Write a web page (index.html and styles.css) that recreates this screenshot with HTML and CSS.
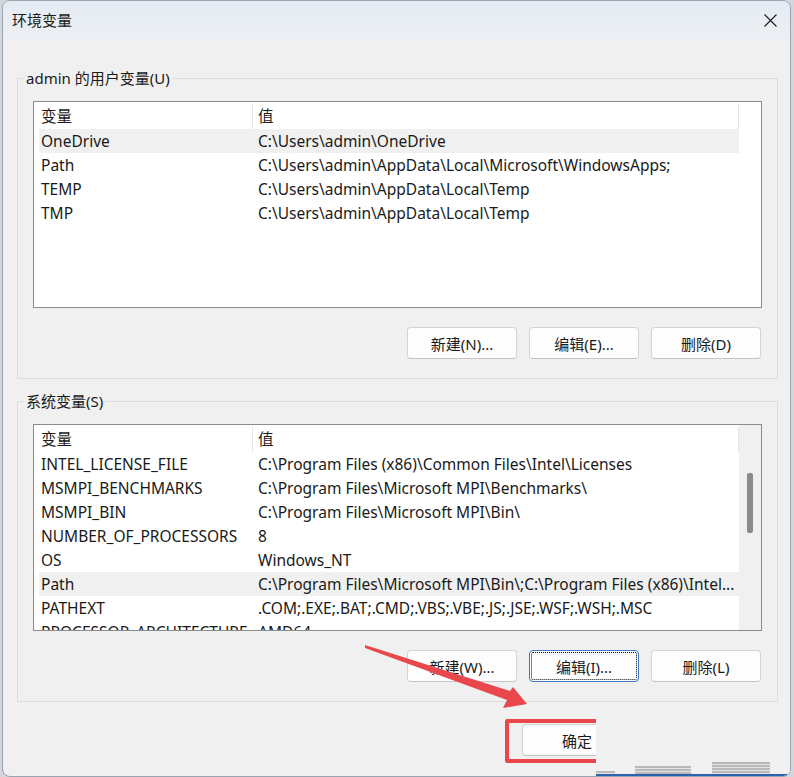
FILE: index.html
```html
<!DOCTYPE html>
<html lang="zh-CN">
  <head>
    <meta charset="UTF-8" />
    <title>环境变量</title>
    <link rel="stylesheet" href="styles.css">
  </head>
  <body>
    <div class="window">
      <!-- Title bar -->
      <div class="titlebar">
        <span class="title">环境变量</span>
        <span class="close">
          <svg width="13" height="13" viewBox="0 0 13 13">
            <path d="M0.5 0.5 L12.5 12.5 M12.5 0.5 L0.5 12.5" stroke="#1a1a1a" stroke-width="1.1" fill="none" />
          </svg>
        </span>
      </div>

      <div class="content">
        <!-- User variables -->
        <fieldset class="group">
          <legend>admin 的用户变量(U)</legend>
          <div class="list">
            <div class="list-body">
              <div class="row head">
                <div class="name">变量</div>
                <div class="value">值</div>
              </div>
              <div class="row selected"><div class="name">OneDrive</div><div class="value">C:\Users\admin\OneDrive</div></div>
              <div class="row"><div class="name">Path</div><div class="value">C:\Users\admin\AppData\Local\Microsoft\WindowsApps;</div></div>
              <div class="row"><div class="name">TEMP</div><div class="value">C:\Users\admin\AppData\Local\Temp</div></div>
              <div class="row"><div class="name">TMP</div><div class="value">C:\Users\admin\AppData\Local\Temp</div></div>
            </div>
            <div class="scroll-space"></div>
          </div>
          <div class="buttons">
            <button class="btn">新建(N)...</button>
            <button class="btn">编辑(E)...</button>
            <button class="btn">删除(D)</button>
          </div>
        </fieldset>

        <!-- System variables -->
        <fieldset class="group second">
          <legend>系统变量(S)</legend>
          <div class="list">
            <div class="list-body">
              <div class="row head">
                <div class="name">变量</div>
                <div class="value">值</div>
              </div>
              <div class="row"><div class="name">INTEL_LICENSE_FILE</div><div class="value">C:\Program Files (x86)\Common Files\Intel\Licenses</div></div>
              <div class="row"><div class="name">MSMPI_BENCHMARKS</div><div class="value">C:\Program Files\Microsoft MPI\Benchmarks\</div></div>
              <div class="row"><div class="name">MSMPI_BIN</div><div class="value">C:\Program Files\Microsoft MPI\Bin\</div></div>
              <div class="row"><div class="name">NUMBER_OF_PROCESSORS</div><div class="value">8</div></div>
              <div class="row"><div class="name">OS</div><div class="value">Windows_NT</div></div>
              <div class="row selected"><div class="name">Path</div><div class="value">C:\Program Files\Microsoft MPI\Bin\;C:\Program Files (x86)\Intel...</div></div>
              <div class="row"><div class="name">PATHEXT</div><div class="value">.COM;.EXE;.BAT;.CMD;.VBS;.VBE;.JS;.JSE;.WSF;.WSH;.MSC</div></div>
              <div class="row"><div class="name">PROCESSOR_ARCHITECTURE</div><div class="value">AMD64</div></div>
            </div>
            <div class="scrollbar"><div class="thumb"></div></div>
          </div>
          <div class="buttons">
            <button class="btn">新建(W)...</button>
            <button class="btn focused">编辑(I)...</button>
            <button class="btn">删除(L)</button>
          </div>
        </fieldset>

        <div class="footer">
          <button class="btn">确定</button>
          <button class="btn">取消</button>
        </div>
      </div>

      <!-- Annotations -->
      <svg class="arrow" width="794" height="777" viewBox="0 0 794 777">
        <polygon points="365,645 510,691 513,687 527,704 503,708 507,700 365,648" fill="#e8474c" />
      </svg>
      <div class="mark"></div>

      <!-- Pasted strip covering the lower right corner -->
      <div class="patch">
        <div class="stub s1"></div>
        <div class="stub s2"></div>
        <div class="stub s3"></div>
      </div>
    </div>
  </body>
</html>
```

FILE: styles.css
```css
/* General */
body {
  margin: 0;
  padding: 0;
  background-color: #d4d6d9;
  font-family: "Noto Sans", "Noto Sans CJK SC", sans-serif;
  font-size: 15.5px;
  color: #1a1a1a;
  overflow: hidden;
}

.window {
  position: relative;
  width: 787px;
  height: 775px;
  margin-left: 2px;
  background-color: #f0f0f0;
  border: 1px solid #9aa4b0;
  border-radius: 8px;
  overflow: hidden;
}

/* Title bar */
.titlebar {
  height: 39px;
  display: flex;
  align-items: center;
  justify-content: space-between;
  padding: 0 12px 0 9px;
  background: linear-gradient(#e4ebf2, #ecf0f4);
}

.title {
  font-size: 15px;
  line-height: 20px;
  margin-top: -2px;
}

.close {
  display: flex;
  margin-top: -1px;
  margin-right: 1px;
}

/* Content */
.content {
  padding: 0 12px 0 14px;
}

.group {
  margin: 29px 0 0 0;
  padding: 14px 15px 19px 15px;
  border: 1px solid #dcdcdc;
  min-width: 0;
}

.group.second {
  margin-top: 13px;
}

.group legend {
  padding: 0 2px;
  margin-left: -9px;
  line-height: 18px;
  font-size: 15px;
}

/* List view */
.list {
  height: 205px;
  display: flex;
  background: #fff;
  border: 1px solid #8c8c8c;
  overflow: hidden;
}

.list-body {
  flex: 1;
  padding-left: 5px;
}

.row {
  display: flex;
  height: 24px;
  line-height: 24px;
  white-space: nowrap;
}

.row.head {
  height: 27px;
  line-height: 28px;
}

.row.selected {
  background-color: #f0f0f0;
}

.name {
  width: 211px;
  padding-left: 2px;
}

.value {
  flex: 1;
  padding-left: 6px;
}

.row.head .value {
  border-left: 1px solid #e5e5e5;
  border-right: 1px solid #e5e5e5;
  padding-left: 5px;
  margin-top: 2px;
  line-height: 25px;
}

.scroll-space {
  width: 22px;
}

.scrollbar {
  width: 22px;
  background-color: #f0f0f0;
  position: relative;
}

.thumb {
  position: absolute;
  left: 8px;
  top: 48px;
  width: 6px;
  height: 60px;
  background-color: #8a8a8a;
  border-radius: 2px;
}

/* Buttons */
.buttons {
  display: flex;
  justify-content: flex-end;
  gap: 12px;
  margin-top: 19px;
  margin-right: 1px;
}

.btn {
  width: 110px;
  height: 32px;
  font-family: inherit;
  font-size: 15px;
  color: #1a1a1a;
  background-color: #fdfdfd;
  border: 1px solid #d3d3d3;
  border-bottom-color: #c4c4c4;
  border-radius: 4px;
  padding: 0;
}

.btn.focused {
  border-color: #3c78c8;
  outline: 1px dotted #111;
  outline-offset: -3px;
}

.footer {
  display: flex;
  gap: 12px;
  margin-top: 22px;
  padding-left: 505px;
}

/* Annotations */
.arrow {
  position: absolute;
  left: -3px;
  top: -1px;
  pointer-events: none;
}

.mark {
  position: absolute;
  left: 502px;
  top: 718px;
  width: 112px;
  height: 36px;
  border: 4px solid #e8474c;
  border-radius: 2px;
}

.patch {
  position: absolute;
  left: 593px;
  top: 712px;
  right: 0;
  bottom: 0;
  background-color: #f0f0f0;
  border-bottom: 2px solid #2a63a8;
}

.stub {
  position: absolute;
  bottom: 0;
  background: repeating-linear-gradient(#b9b9b9 0 2px, #e4e4e4 2px 3px);
}

.s1 {
  left: 0;
  width: 19px;
  height: 3px;
}

.s2 {
  left: 39px;
  width: 56px;
  height: 8px;
}

.s3 {
  left: 116px;
  width: 58px;
  height: 12px;
}
```
